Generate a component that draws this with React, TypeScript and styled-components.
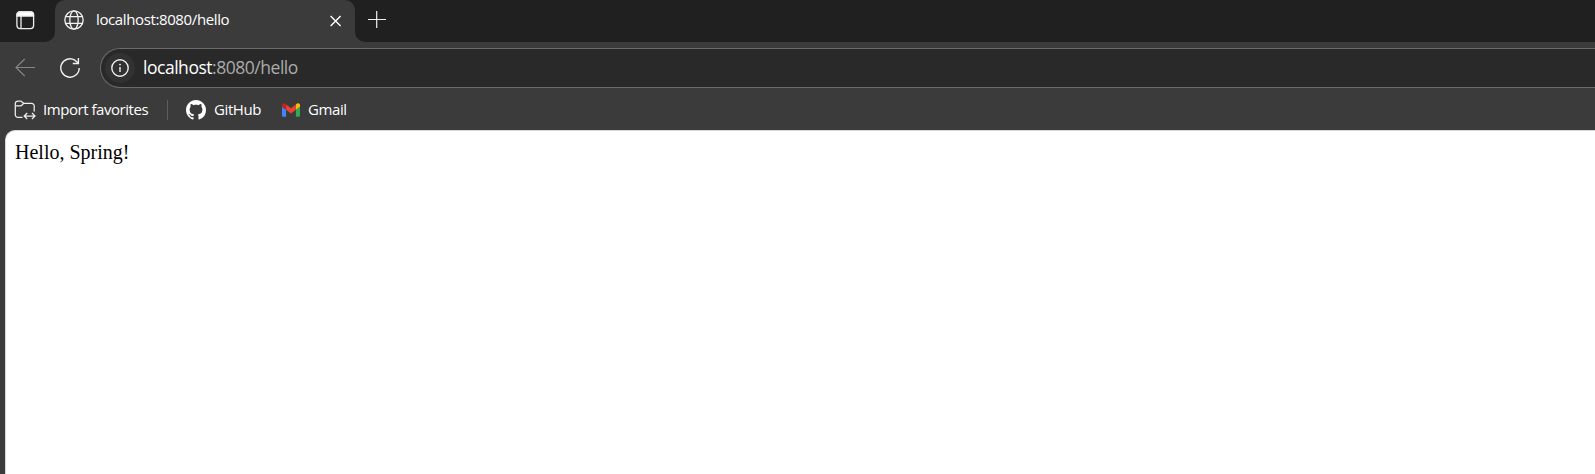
import React from 'react';
import styled, { createGlobalStyle } from 'styled-components';

const GlobalStyle = createGlobalStyle`
  *, *::before, *::after { box-sizing: border-box; }
  body { margin: 0; background: #3b3b3b; overflow: hidden; }
`;

const Window = styled.div`
  display: flex;
  flex-direction: column;
  width: 100%;
  height: 100vh;
  background: #3b3b3b;
  color: #fff;
  font-family: 'Open Sans', 'Noto Sans', sans-serif;
  svg { display: block; flex: none; }
`;

const TabStrip = styled.div`
  display: flex;
  height: 42px;
  flex: none;
`;

const StripStart = styled.div`
  width: 55px;
  padding: 11px 0 0 16px;
  background: #202020;
  border-bottom-right-radius: 10px;
`;

const TabBackdrop = styled.div`
  width: 300px;
  background: #202020;
`;

const Tab = styled.div`
  display: flex;
  align-items: center;
  height: 100%;
  padding: 0 11px 2px 9px;
  background: #3b3b3b;
  border-radius: 10px 10px 0 0;
`;

const StripEnd = styled.div`
  flex: 1;
  padding: 10px 0 0 12px;
  background: #202020;
  border-bottom-left-radius: 10px;
`;

const Label = styled.span<{ $size: number; $spacing: number }>`
  padding-bottom: 2px;
  font-size: ${(p) => p.$size}px;
  letter-spacing: ${(p) => p.$spacing}px;
  line-height: 20px;
  white-space: nowrap;
`;

const TabTitle = styled(Label)`
  flex: 1;
  margin-left: 12px;
`;

const Toolbar = styled.div`
  display: flex;
  align-items: center;
  height: 52px;
  flex: none;
  padding-left: 15px;
`;

const NavButton = styled.div<{ $gap: number }>`
  margin-right: ${(p) => p.$gap}px;
`;

const AddressBar = styled.div`
  display: flex;
  align-items: center;
  flex: 1;
  height: 40px;
  padding-left: 4px;
  background: #292929;
  border: 1px solid #6b6b6b;
  border-right: 0;
  border-radius: 20px 0 0 20px;
`;

const SiteInfo = styled.div`
  display: flex;
  align-items: center;
  justify-content: center;
  width: 30px;
  height: 30px;
  margin-right: 8px;
  border-radius: 50%;
  background: #323232;
`;

const UrlRest = styled.span`
  color: #ababab;
`;

const FavoritesBar = styled.div`
  display: flex;
  align-items: center;
  height: 36px;
  flex: none;
  padding: 0 0 4px 14px;
`;

const Favorite = styled.div<{ $width: number; $gap: number }>`
  display: flex;
  align-items: center;
  gap: ${(p) => p.$gap}px;
  width: ${(p) => p.$width}px;
`;

const Divider = styled.div`
  width: 1px;
  height: 20px;
  margin-right: 18px;
  background: #5d5d5d;
`;

const Page = styled.main`
  flex: 1;
  margin-left: 5px;
  padding: 10px 9px;
  background: #fff;
  border-left: 1px solid #d8d8d8;
  border-top: 1px solid #d8d8d8;
  border-top-left-radius: 10px;
  color: #000;
  font: 20px/22px 'Liberation Serif', serif;
`;

const TabActionsIcon = () => (
  <svg width="19" height="19" viewBox="0 0 19 19" fill="none" stroke="#eee" strokeWidth="1.3">
    <rect x="0.9" y="0.9" width="16.7" height="16.7" rx="3" />
    <path d="M1 5V3.5A2.5 2.5 0 0 1 3.5 1h11.5A2.5 2.5 0 0 1 17.5 3.5V5Z" fill="#fff" />
    <path d="M5 5v12.5" />
  </svg>
);

const GlobeIcon = () => (
  <svg width="20" height="20" viewBox="0 0 21 21" fill="none" stroke="#f2f2f2" strokeWidth="1.4">
    <circle cx="10.5" cy="10.5" r="9.6" />
    <ellipse cx="10.5" cy="10.5" rx="4.4" ry="9.6" />
    <path d="M1.7 7h17.6M1.7 14h17.6" />
  </svg>
);

const CloseIcon = () => (
  <svg width="17" height="17" viewBox="0 0 17 17" fill="none" stroke="#fff" strokeWidth="1.4">
    <path d="M3.6 4l10 10M13.6 4l-10 10" />
  </svg>
);

const PlusIcon = () => (
  <svg width="20" height="20" viewBox="0 0 20 20" fill="none" stroke="#f0f0f0" strokeWidth="1.2">
    <path d="M1 9.5h18M9.7 1v17" />
  </svg>
);

const BackIcon = () => (
  <svg width="21" height="20" viewBox="0 0 21 20" fill="none" stroke="#858585" strokeWidth="1.2">
    <path d="M20 9.5H1M9.7 1L1 9.5l8.7 8.5" />
  </svg>
);

const RefreshIcon = () => (
  <svg width="20" height="20" viewBox="0 0 20 20" fill="none" stroke="#f2f2f2" strokeWidth="1.4">
    <path d="M19.2 10A9.2 9.2 0 1 1 14.9 2.2L18.2 5" />
    <path d="M18.4 0v5.5h-5.6" />
  </svg>
);

const InfoIcon = () => (
  <svg width="18" height="18" viewBox="0 0 18 18" fill="none" stroke="#eee" strokeWidth="1.4">
    <circle cx="9" cy="9" r="8.2" />
    <path d="M9 8v5" />
    <circle cx="9" cy="5.6" r="0.95" fill="#eee" stroke="none" />
  </svg>
);

const ImportIcon = () => (
  <svg width="22" height="20" viewBox="0 0 22 20" fill="none" stroke="#eee" strokeWidth="1.25">
    <path d="M8.5 17.4H4A2.7 2.7 0 0 1 1.3 14.7V3.7A2.7 2.7 0 0 1 4 1h3l2.6 2.3H17.5A2.7 2.7 0 0 1 20.2 6v5.5" />
    <path d="M1.3 5.8H6.4c.8 0 1.1-.2 1.7-.8l1.5-1.7" />
    <path d="M10.6 16h10M13.2 13l-3 3 3 3M18 13l3 3-3 3" />
  </svg>
);

const GitHubIcon = () => (
  <svg width="20" height="20" viewBox="0 0 16 16" fill="#fff">
    <path d="M8 0C3.58 0 0 3.58 0 8c0 3.54 2.29 6.53 5.47 7.59.4.07.55-.17.55-.38 0-.19-.01-.82-.01-1.49-2.01.37-2.53-.49-2.69-.94-.09-.23-.48-.94-.82-1.13-.28-.15-.68-.52-.01-.53.63-.01 1.08.58 1.23.82.72 1.21 1.87.87 2.33.66.07-.52.28-.87.51-1.07-1.78-.2-3.64-.89-3.64-3.95 0-.87.31-1.59.82-2.15-.08-.2-.36-1.02.08-2.12 0 0 .67-.21 2.2.82.64-.18 1.32-.27 2-.27s1.36.09 2 .27c1.53-1.04 2.2-.82 2.2-.82.44 1.1.16 1.92.08 2.12.51.56.82 1.27.82 2.15 0 3.07-1.87 3.75-3.65 3.95.29.25.54.73.54 1.48 0 1.07-.01 1.93-.01 2.2 0 .21.15.46.55.38A8.01 8.01 0 0 0 16 8c0-4.42-3.58-8-8-8Z" />
  </svg>
);

const GmailIcon = () => (
  <svg width="18" height="14" viewBox="52 42 88 66">
    <path fill="#4285f4" d="M58 108h14V74L52 59v43c0 3.32 2.69 6 6 6" />
    <path fill="#34a853" d="M120 108h14c3.32 0 6-2.69 6-6V59l-20 15" />
    <path fill="#fbbc04" d="M120 48v26l20-15v-8c0-7.42-8.47-11.65-14.4-7.2" />
    <path fill="#ea4335" d="M72 74V48l24 18 24-18v26L96 92" />
    <path fill="#c5221f" d="M52 51v8l20 15V48l-5.6-4.2c-5.94-4.45-14.4-.22-14.4 7.2" />
  </svg>
);

export default function App() {
  return (
    <Window>
      <GlobalStyle />
      <TabStrip>
        <StripStart><TabActionsIcon /></StripStart>
        <TabBackdrop>
          <Tab>
            <GlobeIcon />
            <TabTitle $size={15} $spacing={-0.38}>localhost:8080/hello</TabTitle>
            <CloseIcon />
          </Tab>
        </TabBackdrop>
        <StripEnd><PlusIcon /></StripEnd>
      </TabStrip>
      <Toolbar>
        <NavButton $gap={24}><BackIcon /></NavButton>
        <NavButton $gap={20}><RefreshIcon /></NavButton>
        <AddressBar>
          <SiteInfo><InfoIcon /></SiteInfo>
          <Label $size={17.5} $spacing={-0.47}>localhost<UrlRest>:8080/hello</UrlRest></Label>
        </AddressBar>
      </Toolbar>
      <FavoritesBar>
        <Favorite $width={153} $gap={7}>
          <ImportIcon />
          <Label $size={15} $spacing={-0.45}>Import favorites</Label>
        </Favorite>
        <Divider />
        <Favorite $width={96} $gap={8}>
          <GitHubIcon />
          <Label $size={15} $spacing={-0.4}>GitHub</Label>
        </Favorite>
        <Favorite $width={80} $gap={8}>
          <GmailIcon />
          <Label $size={15} $spacing={-0.4}>Gmail</Label>
        </Favorite>
      </FavoritesBar>
      <Page>Hello, Spring!</Page>
    </Window>
  );
}
